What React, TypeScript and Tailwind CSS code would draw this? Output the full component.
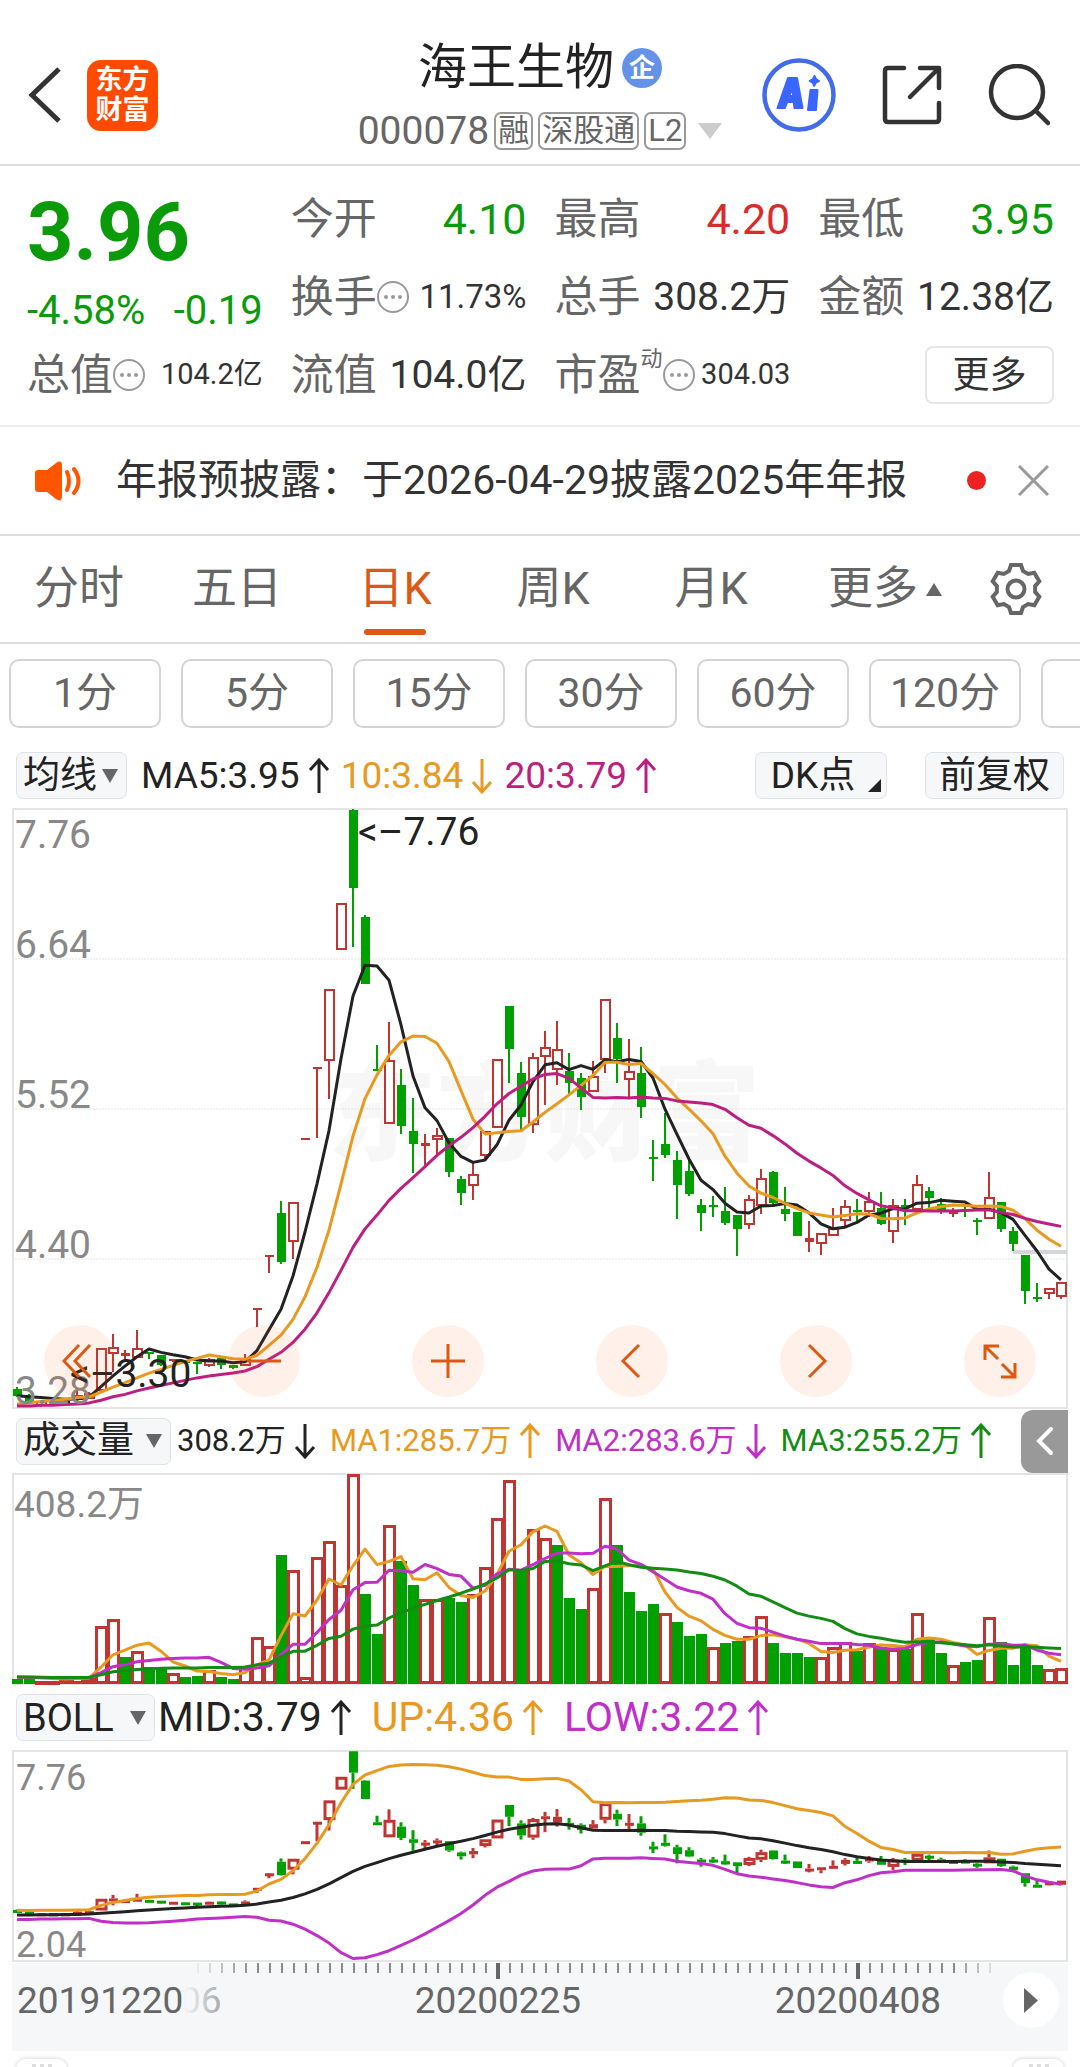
import type { ReactNode } from "react";

type Candle = [color: "r" | "g" | "k", high: number, top: number, bottom: number, low: number];

const RED = "#bf3532";
const GREEN = "#00a000";
const ORANGE = "#e8991f";
const MAGENTA = "#bd1f80";
const PURPLE = "#c030c8";
const STEP = 12;

// heights are measured downwards from the 7.76 line, 600 units = 4.48 yuan
const CANDLES: Candle[] = [
  ["g", 578, 580, 587, 588], ["g", 585, 586, 593, 594], ["r", 592, 592, 597, 598], ["k", 592, 592, 594, 594],
  ["k", 591, 592, 594, 594], ["r", 581, 586, 591, 592], ["r", 583, 584, 590, 590], ["r", 539, 539, 582, 582],
  ["r", 525, 538, 545, 563], ["r", 541, 544, 547, 552], ["r", 521, 539, 549, 549], ["g", 543, 543, 545, 550],
  ["g", 546, 546, 556, 557], ["r", 550, 550, 552, 553], ["g", 552, 552, 554, 554], ["g", 553, 553, 555, 565],
  ["r", 549, 550, 557, 558], ["g", 548, 549, 556, 560], ["g", 556, 556, 559, 560], ["r", 545, 549, 557, 557],
  ["r", 499, 499, 500, 518], ["r", 446, 446, 447, 464], ["g", 392, 404, 453, 455], ["r", 393, 393, 433, 450],
  ["r", 329, 329, 330, 330], ["r", 258, 258, 259, 329], ["r", 180, 180, 252, 290], ["r", 94, 94, 141, 141],
  ["g", 0, 1, 79, 138], ["g", 106, 108, 175, 175], ["g", 236, 260, 262, 262], ["r", 213, 251, 315, 315],
  ["g", 260, 276, 317, 325], ["g", 289, 322, 335, 364], ["r", 325, 334, 337, 356], ["r", 319, 326, 331, 345],
  ["g", 329, 329, 363, 368], ["g", 367, 370, 384, 396], ["r", 354, 365, 377, 391], ["r", 322, 322, 347, 352],
  ["r", 250, 250, 319, 319], ["g", 197, 197, 240, 274], ["g", 253, 264, 308, 323], ["r", 244, 248, 316, 324],
  ["r", 222, 238, 248, 296], ["r", 212, 240, 261, 276], ["g", 244, 262, 274, 287], ["g", 264, 269, 288, 301],
  ["r", 252, 267, 283, 283], ["r", 190, 190, 251, 264], ["g", 214, 229, 250, 274], ["r", 230, 262, 271, 289],
  ["g", 238, 264, 298, 309], ["g", 331, 348, 350, 372], ["g", 304, 335, 346, 349], ["g", 342, 351, 376, 410],
  ["g", 351, 362, 385, 387], ["g", 390, 396, 404, 422], ["g", 387, 396, 397, 408], ["g", 378, 402, 414, 416],
  ["g", 406, 406, 420, 447], ["r", 386, 390, 416, 420], ["r", 360, 369, 397, 405], ["g", 362, 363, 394, 396],
  ["g", 378, 400, 405, 412], ["g", 403, 403, 427, 427], ["r", 412, 429, 433, 443], ["r", 424, 424, 435, 446],
  ["r", 399, 419, 427, 427], ["r", 391, 397, 412, 418], ["g", 390, 401, 403, 412], ["r", 383, 392, 403, 408],
  ["g", 383, 399, 415, 416], ["r", 390, 396, 423, 434], ["g", 390, 396, 398, 416], ["r", 366, 375, 401, 401],
  ["g", 378, 382, 389, 399], ["g", 389, 395, 403, 405], ["r", 399, 401, 405, 408], ["g", 395, 400, 402, 408],
  ["g", 409, 411, 412, 426], ["r", 363, 388, 410, 410], ["g", 393, 393, 420, 423], ["g", 418, 422, 435, 442],
  ["g", 446, 446, 482, 495], ["g", 474, 488, 490, 493], ["r", 479, 479, 485, 490], ["r", 473, 473, 488, 490],
];

const VOLUMES = [
  5, 5, 3, 3, 4, 8, 6, 58, 65, 27, 33, 17, 17, 11, 7, 8, 14, 7, 5, 18, 47, 38, 129, 114, 7, 127, 143, 99, 210, 90, 50,
  159, 123, 99, 85, 85, 86, 82, 90, 117, 166, 204, 114, 155, 146, 139, 86, 75, 96, 186, 139, 92, 73, 80, 71, 62, 48, 50,
  37, 41, 43, 48, 68, 41, 31, 31, 27, 27, 37, 42, 33, 41, 37, 35, 35, 71, 47, 31, 19, 22, 24, 67, 42, 19, 39, 19, 15, 16,
];

const closes = CANDLES.map(([color, , top, bottom]) => (color === "g" ? bottom : top));
// closes and volumes of the days just left of the visible window
const pastCloses = [592, 608, 592, 608, 592, 608, 592, 608, 592, 608, 604, 604, 604, 604, 604, 588, 588, 588, 588];
const pastVolumes = pastCloses.map(() => 6);

const windows = (values: number[], past: number[], size: number) => {
  const all = [...past, ...values];
  return values.map((_, i) => all.slice(i + past.length - size + 1, i + past.length + 1));
};
const mean = (list: number[]) => list.reduce((a, b) => a + b, 0) / list.length;
const deviation = (list: number[]) => {
  const m = mean(list);
  return Math.sqrt(mean(list.map((v) => (v - m) ** 2)));
};
const average = (values: number[], past: number[], size: number) => windows(values, past, size).map(mean);

const xAt = (i: number) => 5 + STEP * i;
const toPoints = (values: number[]) => values.map((v, i) => `${xAt(i)},${v.toFixed(1)}`).join(" ");

const Line = ({ values, color }: { values: number[]; color: string }) => (
  <polyline points={toPoints(values)} fill="none" stroke={color} strokeWidth={3} strokeLinejoin="round" />
);

const Candles = ({ scale, offset, stroke }: { scale: number; offset: number; stroke: number }) => (
  <g>
    {CANDLES.map(([kind, high, top, bottom, low], i) => {
      const x = xAt(i);
      const y = (v: number) => offset + v * scale;
      const color = kind === "r" ? RED : kind === "g" ? GREEN : "#222222";
      const height = Math.max(y(bottom) - y(top), stroke);
      const hollow = kind === "r" && height > stroke * 2;
      return (
        <g key={i} stroke={color} strokeWidth={stroke}>
          {high < top && <line x1={x} x2={x} y1={y(high)} y2={y(top)} />}
          {low > bottom && <line x1={x} x2={x} y1={y(bottom)} y2={y(low)} />}
          {hollow ? (
            <rect x={x - 4} y={y(top) + stroke / 2} width={9} height={height - stroke} fill="#ffffff" />
          ) : (
            <rect x={x - 4} y={y(top)} width={9} height={height} fill={color} stroke="none" />
          )}
        </g>
      );
    })}
  </g>
);

const Frame = ({ height }: { height: number }) => (
  <rect x={1} y={1} width={1054} height={height - 2} fill="none" stroke="#e4e4e4" strokeWidth={2} />
);

const KChart = () => (
  <svg viewBox="0 0 1056 601" className="block w-full overflow-visible" role="img" aria-label="日K">
    <text x={316} y={344} fontSize={108} fontWeight={900} fill="#f7f7f7">
      东方财富
    </text>
    <Frame height={601} />
    {[151, 301, 451].map((y) => (
      <line key={y} x1={0} x2={1056} y1={y} y2={y} stroke="#e2e2e2" strokeWidth={1} strokeDasharray="2 1" />
    ))}
    <line x1={1001} x2={1055} y1={444} y2={444} stroke="#d3d6db" strokeWidth={4} />
    <Candles scale={1} offset={1} stroke={2} />
    <g strokeWidth={2}>
      <Line values={average(closes, pastCloses, 5)} color="#222222" />
      <Line values={average(closes, pastCloses, 10)} color={ORANGE} />
      <Line values={average(closes, pastCloses, 20)} color={MAGENTA} />
    </g>
    <g fontSize={39} fill="#888888">
      <text x={3} y={40}>7.76</text>
      <text x={3} y={150}>6.64</text>
      <text x={3} y={300}>5.52</text>
      <text x={3} y={450}>4.40</text>
      <text x={3} y={596}>3.28</text>
    </g>
    <g fontSize={39} fill="#222222">
      <text x={346} y={37}>&lt;–7.76</text>
      <text x={58} y={579}>&lt;–3.30</text>
    </g>
  </svg>
);

const VolumeChart = () => {
  const bars = (size: number) => average(VOLUMES, pastVolumes, size).map((v) => 210 - v);
  return (
    <svg viewBox="0 0 1056 212" className="block w-full" role="img" aria-label="成交量">
      <Frame height={212} />
      {VOLUMES.map((v, i) => {
        const up = i > 0 && closes[i] <= closes[i - 1];
        const x = xAt(i);
        return up ? (
          <rect key={i} x={x - 4.5} y={212.5 - v} width={10} height={Math.max(v - 3, 1)} fill="#ffffff" stroke={RED} strokeWidth={3} />
        ) : (
          <rect key={i} x={x - 5} y={211 - v} width={11} height={v} fill={GREEN} />
        );
      })}
      <Line values={bars(5)} color={ORANGE} />
      <Line values={bars(10)} color={PURPLE} />
      <Line values={bars(20)} color="#148c14" />
      <text x={2} y={44} fontSize={37} fill="#888888">
        408.2万
      </text>
    </svg>
  );
};

const BollChart = () => {
  const scale = 0.2741;
  const sets = windows(closes, pastCloses, 20);
  const band = (factor: number) => sets.map((s) => 1 + scale * (mean(s) + factor * deviation(s)));
  return (
    <svg viewBox="0 0 1056 212" className="block w-full" role="img" aria-label="BOLL">
      <Frame height={212} />
      <Candles scale={scale} offset={1} stroke={3} />
      <Line values={band(-2)} color={ORANGE} />
      <Line values={band(0)} color="#222222" />
      <Line values={band(2)} color={PURPLE} />
      <g fontSize={36} fill="#888888">
        <text x={4} y={40}>7.76</text>
        <text x={4} y={207}>2.04</text>
      </g>
    </svg>
  );
};

const DateAxis = () => (
  <svg viewBox="0 0 1056 88" className="block w-full bg-[#f6f7f9]" role="img" aria-label="日期">
    <defs>
      <linearGradient id="fade" gradientUnits="userSpaceOnUse" x1="172" x2="240" y1="0" y2="0">
        <stop offset="0" stopColor="#666666" stopOpacity="0" />
        <stop offset="1" stopColor="#666666" />
      </linearGradient>
    </defs>
    {Array.from({ length: 67 }, (_, i) => {
      const major = i === 25 || i === 55;
      const opacity = Math.min(1, i / 5 + 0.1, (67 - i) / 4);
      return (
        <rect
          key={i}
          x={185 + i * STEP - (major ? 1 : 0)}
          y={0}
          width={major ? 4 : 2}
          height={major ? 16 : 10}
          fill={major ? "#666666" : "#888888"}
          opacity={opacity}
        />
      );
    })}
    <g fontSize={37} fill="#666666">
      <text x={5} y={50}>20191220</text>
      <text x={486} y={50} textAnchor="middle">20200225</text>
      <text x={846} y={50} textAnchor="middle">20200408</text>
      <text x={168} y={50} fill="url(#fade)">06</text>
    </g>
  </svg>
);

const Arrow = ({ down = false }: { down?: boolean }) => (
  <svg viewBox="0 0 22 36" className="h-[36px] w-[22px] shrink-0" fill="none" stroke="currentColor" strokeWidth={3}>
    <path d={down ? "M11 1v33M2 24l9 10 9-10" : "M11 35V2M2 12l9-10 9 10"} />
  </svg>
);

const Dots = () => (
  <svg viewBox="0 0 32 32" className="size-[32px] shrink-0" fill="none" stroke="#999999" strokeWidth={2}>
    <circle cx={16} cy={16} r={15} />
    <g fill="#999999" stroke="none">
      <circle cx={9} cy={16} r={2} />
      <circle cx={16} cy={16} r={2} />
      <circle cx={23} cy={16} r={2} />
    </g>
  </svg>
);

const gearPoints = [0, 60, 120, 180, 240, 300]
  .flatMap((deg) => {
    const a = (deg * Math.PI) / 180;
    return [[-7, -18], [-5, -24], [5, -24], [7, -18]].map(
      ([x, y]) => `${(27 + x * Math.cos(a) - y * Math.sin(a)).toFixed(1)},${(27 + x * Math.sin(a) + y * Math.cos(a)).toFixed(1)}`,
    );
  })
  .join(" ");

const Header = () => (
  <header className="grid h-[166px] grid-cols-[1fr_auto_1fr] items-center border-b-2 border-[#dcdcdc] pt-[26px]">
    <div className="flex items-center gap-[26px] pl-7">
      <button aria-label="返回">
        <svg viewBox="0 0 33 56" className="h-[56px] w-[33px]" fill="none" stroke="#333333" strokeWidth={5}>
          <path d="M31 2L4 28l27 26" />
        </svg>
      </button>
      <div className="flex size-[71px] flex-col items-center justify-center rounded-[14px] bg-[#ff4a00] text-[27px] leading-[30px] font-bold text-white">
        <span>东方</span>
        <span>财富</span>
      </div>
    </div>
    <div className="flex flex-col items-center pt-2">
      <h1 className="flex items-center gap-2 text-[49px] leading-[64px] text-[#222]">
        海王生物
        <span className="flex size-10 items-center justify-center rounded-full bg-[#6492e8] text-[26px] leading-none font-bold text-white">企</span>
      </h1>
      <div className="flex h-[62px] items-center gap-[5px] text-[39px] text-[#666]">
        000078
        {["融", "深股通", "L2"].map((tag) => (
          <span key={tag} className="rounded-[7px] border-2 border-[#999] px-[2px] text-[31px] leading-[34px]">
            {tag}
          </span>
        ))}
        <svg viewBox="0 0 24 16" className="ml-[7px] h-4 w-6" fill="#cccccc">
          <path d="M0 0h24L12 16z" />
        </svg>
      </div>
    </div>
    <div className="flex items-center justify-end gap-[46px] pr-[30px]">
      <button aria-label="Ai">
        <svg viewBox="0 0 74 74" className="size-[74px]">
          <circle cx={37} cy={37} r={34.5} fill="none" stroke="#416be8" strokeWidth={4.5} />
          <g fill="#3a66ff" stroke="#3a66ff" strokeWidth={2} strokeLinejoin="round">
            <path d="M26 20h9l5.500 30h-8l-.8-6h-6.500l-2.500 6h-7.200zM30 30l-2.700 8h4z" fillRule="evenodd" />
            <path d="M48.500 32h7l-1.500 20h-8z" />
            <path d="M52.500 18l1.500 3.200 3 1.800-3.200 1.600-1.600 3.200-1.500-3.200-3-1.700 3.200-1.600z" />
          </g>
        </svg>
      </button>
      <button aria-label="分享">
        <svg viewBox="0 0 60 60" className="size-[60px]" fill="none" stroke="#333333" strokeWidth={4.500} strokeLinecap="round" strokeLinejoin="round">
          <path d="M22 3H6Q3 3 3 6v48q0 3 3 3h48q3 0 3-3V38M38 3h19v20M56 4L28 32" />
        </svg>
      </button>
      <button aria-label="搜索">
        <svg viewBox="0 0 62 62" className="size-[62px]" fill="none" stroke="#333333" strokeWidth={4.500} strokeLinecap="round">
          <circle cx={29} cy={28} r={26} />
          <path d="M48 47l12 12" />
        </svg>
      </button>
    </div>
  </header>
);

type StatProps = { label: string; value: string; dots?: boolean; sup?: string; tone?: string; size?: string };

const Stat = ({ label, value, dots, sup, tone = "text-[#333]", size = "text-[39px]" }: StatProps) => (
  <div className="flex h-[78px] items-center justify-between">
    <dt className="flex items-center text-[43px] text-[#666]">
      {label}
      {sup && <sup className="-top-4 text-[22px]">{sup}</sup>}
      {dots && <Dots />}
    </dt>
    <dd className={`whitespace-nowrap ${size} ${tone}`}>{value}</dd>
  </div>
);

const Quote = () => (
  <section className="grid grid-cols-4 gap-x-7 border-b-2 border-[#eee] pt-[14px] pr-[26px] pb-[11px] pl-[27px]">
    <div className="row-span-2 flex flex-col pt-[8px] text-[#0a9a0a]">
      <strong className="text-[81px] leading-[90px]">3.96</strong>
      <div className="mt-[8px] flex justify-between text-[40px] leading-[50px]">
        <span>-4.58%</span>
        <span>-0.19</span>
      </div>
    </div>
    <dl className="contents">
      <Stat label="今开" value="4.10" tone="text-[#0a9a0a]" size="text-[43px]" />
      <Stat label="最高" value="4.20" tone="text-[#d92b2b]" size="text-[43px]" />
      <Stat label="最低" value="3.95" tone="text-[#0a9a0a]" size="text-[43px]" />
      <Stat label="换手" value="11.73%" dots size="text-[33px]" />
      <Stat label="总手" value="308.2万" />
      <Stat label="金额" value="12.38亿" />
      <Stat label="总值" value="104.2亿" dots size="text-[29px]" />
      <Stat label="流值" value="104.0亿" />
      <Stat label="市盈" value="304.03" dots sup="动" size="text-[29px]" />
    </dl>
    <div className="flex items-center justify-end">
      <button className="h-[58px] w-[129px] rounded-[8px] border-2 border-[#e6e6e6] text-[37px] leading-none text-[#333]">更多</button>
    </div>
  </section>
);

const Notice = () => (
  <section className="flex h-[109px] items-center border-b-2 border-[#dcdcdc] pr-[31px] pl-[35px]">
    <svg viewBox="0 0 46 40" className="h-[40px] w-[46px]" fill="#ff5500">
      <path d="M3 9h9L21 2q6-4 6 3v30q0 7-6 3l-9-7H3q-3 0-3-3V12q0-3 3-3z" />
      <path d="M32 11q4 9 0 18M39 8q9 12 0 24" fill="none" stroke="#ff5500" strokeWidth={4} strokeLinecap="round" />
    </svg>
    <p className="ml-[35px] flex-1 text-[41px] whitespace-nowrap text-[#333]">年报预披露：于2026-04-29披露2025年年报</p>
    <span className="size-[19px] rounded-full bg-[#ee2222]" />
    <button aria-label="关闭" className="ml-[32px]">
      <svg viewBox="0 0 31 31" className="size-[31px]" stroke="#999999" strokeWidth={3}>
        <path d="M1 1l29 29M30 1L1 30" />
      </svg>
    </button>
  </section>
);

const Tabs = () => (
  <nav className="grid h-[108px] grid-cols-[repeat(6,158fr)_132fr] items-center border-b-2 border-[#dcdcdc] text-[45px] text-[#666]">
    {["分时", "五日", "日K", "周K", "月K"].map((tab) => (
      <button key={tab} className={`relative h-full ${tab === "日K" ? "text-[#dd5812]" : ""}`}>
        {tab}
        {tab === "日K" && <span className="absolute bottom-[7px] left-1/2 h-[6px] w-[62px] -translate-x-1/2 rounded-full bg-[#dd5812]" />}
      </button>
    ))}
    <button className="flex h-full items-center justify-center gap-[8px] pl-8">
      更多
      <svg viewBox="0 0 16 13" className="h-[13px] w-4" fill="#666666">
        <path d="M0 13h16L8 0z" />
      </svg>
    </button>
    <button aria-label="设置" className="flex justify-center pl-1">
      <svg viewBox="0 0 54 54" className="size-[54px]" fill="none" stroke="#666666" strokeWidth={4}>
        <polygon points={gearPoints} />
        <circle cx={27} cy={27} r={8.500} />
      </svg>
    </button>
  </nav>
);

const Periods = () => (
  <div className="flex gap-5 overflow-hidden pt-[15px] pl-[9px] text-[41px] leading-none text-[#666]">
    {["1分", "5分", "15分", "30分", "60分", "120分"].map((period) => (
      <button key={period} className="h-[69px] w-[152px] shrink-0 rounded-[10px] border-2 border-[#d4d4d4]">
        {period}
      </button>
    ))}
    <button aria-label="更多周期" className="h-[69px] w-[152px] shrink-0 rounded-[10px] border-2 border-[#d4d4d4]" />
  </div>
);

const Picker = ({ label, option, className }: { label: string; option: string; className: string }) => (
  <div className={`relative flex h-[47px] shrink-0 items-center rounded-[7px] border border-[#e0e2e6] bg-[#f6f7f9] text-[#222] ${className}`}>
    <select aria-label={label} className="h-full w-full appearance-none bg-transparent pl-[6px] leading-[44px]" defaultValue={option}>
      <option>{option}</option>
    </select>
    <svg viewBox="0 0 16 14" className="pointer-events-none absolute right-[8px] h-[14px] w-4" fill="#666666">
      <path d="M0 0h16L8 14z" />
    </svg>
  </div>
);

const Value = ({ text, color, down }: { text: string; color: string; down?: boolean }) => (
  <span className={`flex shrink-0 items-center gap-2 whitespace-nowrap ${color}`}>
    {text}
    <Arrow down={down} />
  </span>
);

const Round = ({ label, children }: { label: string; children: ReactNode }) => (
  <button aria-label={label} className="flex size-[72px] items-center justify-center rounded-full bg-[#ff6418]/9">
    <svg viewBox="0 0 36 36" className="size-9" fill="none" stroke="#dd5812" strokeWidth={3}>
      {children}
    </svg>
  </button>
);

export default function App() {
  return (
    <main className="w-full overflow-hidden bg-white [font-family:Roboto,'Noto_Sans_CJK_SC',sans-serif]">
      <Header />
      <Quote />
      <Notice />
      <Tabs />
      <Periods />

      <div className="mt-[24px] flex h-[47px] items-center px-4 text-[37px]">
        <Picker label="主图指标" option="均线" className="w-[111px] text-[37px]" />
        <div className="ml-[14px] flex flex-1 gap-[11px]">
          <Value text="MA5:3.95" color="text-[#222]" />
          <Value text="10:3.84" color="text-[#e8991f]" down />
          <Value text="20:3.79" color="text-[#bd1f80]" />
        </div>
        <button className="relative h-full w-[132px] rounded-[7px] border border-[#e0e2e6] bg-[#f6f7f9] pr-4 leading-none text-[#222]">
          DK点
          <svg viewBox="0 0 13 13" className="absolute right-[5px] bottom-[6px] size-[13px]" fill="#222222">
            <path d="M13 0v13H0z" />
          </svg>
        </button>
        <button className="ml-[38px] h-full w-[139px] rounded-[7px] border border-[#e0e2e6] bg-[#f6f7f9] leading-none text-[#222]">前复权</button>
      </div>

      <div className="relative mx-3 mt-[9px]">
        <KChart />
        <div className="absolute inset-x-8 bottom-3 flex justify-between">
          <Round label="最早">
            <path d="M17 2L2 18l15 16M28 2L13 18l15 16" />
          </Round>
          <Round label="缩小">
            <path d="M1 18h34" />
          </Round>
          <Round label="放大">
            <path d="M1 18h34M18 1v34" />
          </Round>
          <Round label="左移">
            <path d="M25 2L9 18l16 16" />
          </Round>
          <Round label="右移">
            <path d="M11 2l16 16-16 16" />
          </Round>
          <Round label="全屏">
            <path d="M3 17V3h14M3 3l13 13M19 34h14V20M33 34L20 21" />
          </Round>
        </div>
      </div>

      <div className="ml-4 mr-3 flex h-[64px] items-center text-[31px]">
        <Picker label="副图一" option="成交量" className="w-[155px] text-[37px]" />
        <div className="ml-[6px] flex flex-1 gap-[14px]">
          <Value text="308.2万" color="text-[#222]" down />
          <Value text="MA1:285.7万" color="text-[#e8991f]" />
          <Value text="MA2:283.6万" color="text-[#c030c8]" down />
          <Value text="MA3:255.2万" color="text-[#148c14]" />
        </div>
        <button aria-label="展开" className="flex h-[63px] w-[47px] shrink-0 items-center justify-center rounded-l-[12px] bg-[#999]">
          <svg viewBox="0 0 18 30" className="h-[30px] w-[18px]" fill="none" stroke="#ffffff" strokeWidth={4} strokeLinecap="round">
            <path d="M15 3L3 15l12 12" />
          </svg>
        </button>
      </div>
      <div className="mx-3">
        <VolumeChart />
      </div>

      <div className="mx-4 flex h-[65px] items-center text-[41px]">
        <Picker label="副图二" option="BOLL" className="w-[139px] text-[38px]" />
        <div className="ml-[3px] flex flex-1 gap-5">
          <Value text="MID:3.79" color="text-[#222]" />
          <Value text="UP:4.36" color="text-[#e8991f]" />
          <Value text="LOW:3.22" color="text-[#c030c8]" />
        </div>
      </div>
      <div className="mx-3">
        <BollChart />
      </div>

      <div className="relative mx-3 mt-px">
        <DateAxis />
        <button aria-label="播放" className="absolute top-[9px] right-[9px] flex size-[56px] items-center justify-center rounded-full bg-white">
          <svg viewBox="0 0 14 25" className="h-[25px] w-[14px]" fill="#666666">
            <path d="M0 0l14 12.500L0 25z" />
          </svg>
        </button>
      </div>

      <div className="flex h-[16px] items-start justify-between overflow-hidden px-4 pt-2">
        {["left", "right"].map((side) => (
          <div key={side} className="flex h-12 w-[51px] justify-center gap-1 rounded-[10px] bg-white pt-[5px] shadow-[0_0_5px_rgba(0,0,0,0.2)]">
            <i className="h-1 w-1 bg-[#ddd]" />
            <i className="h-1 w-1 bg-[#ddd]" />
            <i className="h-1 w-1 bg-[#ddd]" />
          </div>
        ))}
      </div>
    </main>
  );
}
